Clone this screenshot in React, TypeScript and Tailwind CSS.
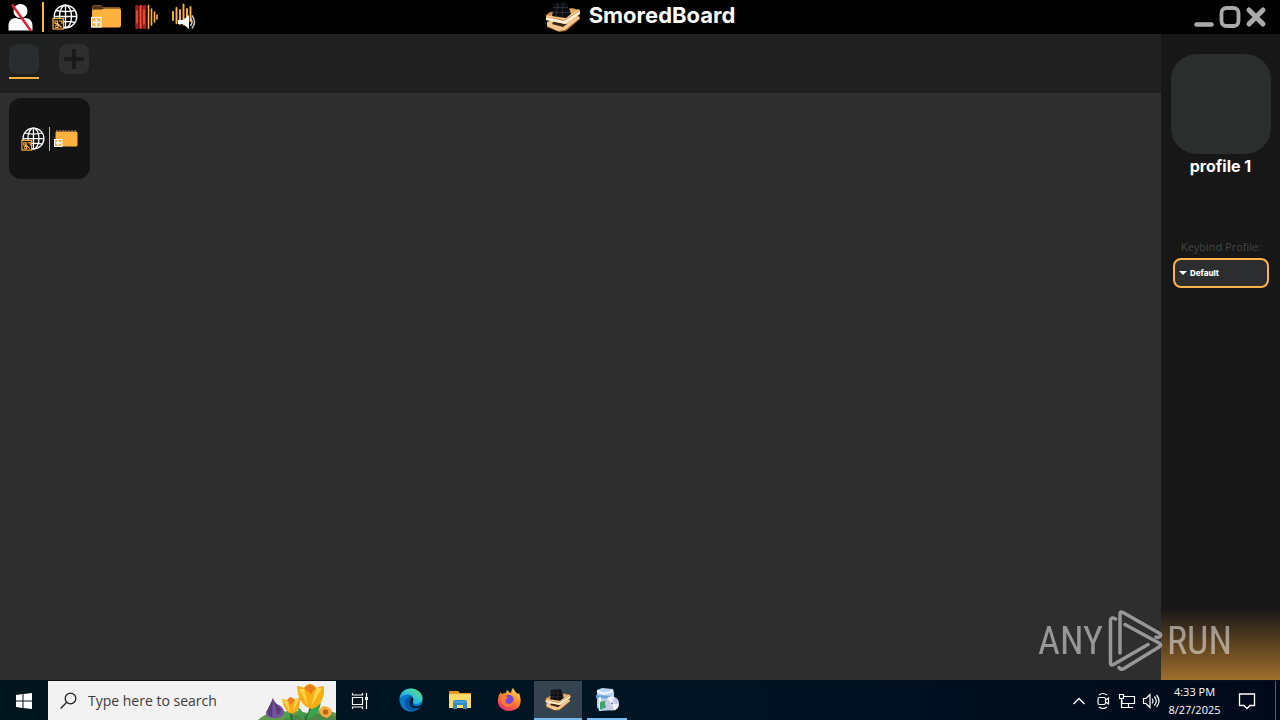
import React from "react";

type IconProps = { className?: string };

function MutedUserIcon({ className }: IconProps) {
  return (
    <svg viewBox="0 0 25 30" className={className} aria-hidden="true">
      <circle cx="12.5" cy="9" r="7" fill="#fff" />
      <path d="M0.5 28.5v-5c0-4.5 3-7.500 7.500-7.500 2.500 1.500 6.500 1.500 9 0 4.500 0 7.500 3 7.500 7.500v5z" fill="#fff" />
      <path d="M4 2.500 23 29" stroke="#e01f35" strokeWidth="2.400" />
    </svg>
  );
}

function GlobeIcon({ className }: IconProps) {
  return (
    <svg viewBox="0 0 26 26" className={className} fill="none" aria-hidden="true">
      <g stroke="#fff" strokeWidth="1.400">
        <circle cx="13.500" cy="12.500" r="11.300" />
        <ellipse cx="13.500" cy="12.500" rx="6" ry="11.300" />
        <path d="M2 12.500h23M4 6.500c5 1.500 14 1.500 19 0M4 18.500c5-1.500 14-1.500 19 0M13.500 1v23" />
      </g>
      <rect x="1" y="14.500" width="10.500" height="10.500" fill="#17120a" stroke="#ffb347" strokeWidth="1.200" />
      <path d="M3 17h2.500v2.500H3zM7 17h3v3M3 22l3-2 3.500 3.500M6 20v3.500H3" stroke="#ffb347" strokeWidth="1.200" />
    </svg>
  );
}

function FolderIcon({ className }: IconProps) {
  return (
    <svg viewBox="0 0 30 24" className={className} aria-hidden="true">
      <path d="M1.500 21V2q0-1.500 1.500-1.500h7l1.500 2H28q1.500 0 1.500 2V8h-28z" fill="#4b321a" stroke="#ad7431" strokeWidth=".7" />
      <path d="M1 6q0-1.500 2-1.500h8l2-1h14.500Q30 3.500 30 6v14q0 2.500-2.500 2.500H3Q1 22.500 1 20z" fill="#ffb140" />
      <rect x=".5" y="12.500" width="9.500" height="9.500" fill="#ffb140" stroke="#fff" strokeWidth="1.200" />
      <path d="M5.300 14v7M2 17.300h6.500" stroke="#fff" strokeWidth="1.800" />
    </svg>
  );
}

function SmallFolderIcon({ className }: IconProps) {
  return (
    <svg viewBox="0 0 24 18" className={className} aria-hidden="true">
      <path d="M2 1.500h20q1.500 0 1.500 1.500v12q0 1.500-1.500 1.500H3q-1.500 0-1.500-1.500V3z" fill="#ffb140" />
      <path d="M2 1h20" stroke="#9d704d" strokeWidth="1.500" strokeDasharray="2 1" />
      <rect x=".5" y="9.500" width="7.500" height="7" fill="#ffb140" stroke="#fff" />
      <path d="M4.300 10.500v5M2 13h5" stroke="#fff" strokeWidth="1.500" />
    </svg>
  );
}

function RecordWaveIcon({ className }: IconProps) {
  return (
    <svg viewBox="0 0 24 26" className={className} fill="none" strokeLinecap="round" aria-hidden="true">
      <path d="M3 2.500v21M7 2.500v21M10.500 2.500v21" stroke="#a31c20" strokeWidth="3.500" />
      <path d="M3 7v12M6.500 2v22M10 6v14" stroke="#ee5a35" strokeWidth="1.500" />
      <path d="M14.500 1.500v23M17.500 5v16M20.500 8v10M23 11v4" stroke="#ffb140" strokeWidth="1.600" />
    </svg>
  );
}

function SpeakerWaveIcon({ className }: IconProps) {
  return (
    <svg viewBox="0 0 26 28" className={className} fill="none" aria-hidden="true">
      <path d="M2 9v8M5.500 5v15M9 7v14M12.500 1.500v20M16 6v13M19.500 4v14" stroke="#ffb140" strokeWidth="1.900" strokeLinecap="round" />
      <path d="M7 17h5l6-5v14l-6-5H7z" fill="#fff" />
      <path d="M19.500 15q3 4 0 8M21 12.500q5 6.500 0 13" stroke="#c8c8c8" strokeWidth="1.500" />
    </svg>
  );
}

function SmoreIcon({ className }: IconProps) {
  return (
    <svg viewBox="0 0 36 32" className={className} aria-hidden="true">
      <path d="m2 21 18 4 14-11 1 4-14 12-7 1-12-5z" fill="#a9672f" />
      <path d="m2 21 5-2 13 3 11-8 4 3-15 12-7 1-11-5z" fill="#f3c78f" />
      <path d="m7 23 11 3 4-3-13-3z" fill="#3b2412" />
      <path d="m1 14 4-3 22-4 8 2v4L20 23 1 19z" fill="#cb8541" />
      <path d="m1 16 18 4 16-10v3L20 23 1 19z" fill="#fff0d6" />
      <path d="m2 15 17 3L34 9" fill="none" stroke="#ffce8e" strokeWidth="1.500" />
      <path d="m4 14 15 3 13-8-6-1z" fill="#e5ab68" />
      <path d="m8 2 14-1 4 12-5 4-14-2 1-4z" fill="#0b0d11" />
      <path d="m13 2-2 13M18 1.500 17 16M8 6.500h15M7 11.500h18" stroke="#3b3e43" strokeWidth=".7" />
    </svg>
  );
}

function TulipsIcon({ className }: IconProps) {
  return (
    <svg viewBox="0 0 78 38" className={className} aria-hidden="true">
      <path d="M0 38q9-9 22-7 13-5 27 0 14-6 29 0v7z" fill="#62994e" />
      <path d="M25 38q12-10 53-4v4z" fill="#4e8748" />
      <path d="M33 27q0 7 1 11M53 22q0 8-6 16" fill="none" stroke="#277237" strokeWidth="2.500" />
      <path d="M46 37q-1-9-6-12 0 10 6 12zM49 37q2-13 14-16-2 13-14 16zM33 38q-5-8-7-9 0 8 7 9z" fill="#37a34c" />
      <path d="M15 16q2 6 6 7 5 3 5 7 0 6-9 6-10 0-9-6 4-6 7-14z" fill="#75549d" />
      <path d="m15 16-1 19q-6-2-4-8zM16 19l3 14q6-3 3-7z" fill="#51346e" opacity=".75" />
      <path d="m24 17 5 1 3-3 4 2 6-1q1 13-8 16-8-2-10-15z" fill="#f8ab16" />
      <path d="m25 18 7 13-2-12zm16-1-6 13 2-13z" fill="#ffd44c" />
      <path d="m29 18 4-3 4 3-4 5z" fill="#e8801d" />
      <path d="M39 4q4 0 7 2 2-4 6-4t6 4q4-2 8-2 1 19-12 23Q40 24 39 4z" fill="#f9ad13" />
      <path d="m41 7 9 17-4-17zm23-1L53 25l5-19z" fill="#ffd548" />
      <path d="m46 6 6-4 6 4-5 6z" fill="#e77f1b" />
      <path d="m66 24 4 1 4 3-1 5-4 3-5-2-3-4 2-5z" fill="#ffad38" />
      <circle cx="67.500" cy="30" r="2.800" fill="#b86925" />
    </svg>
  );
}

function EdgeIcon({ className }: IconProps) {
  return (
    <svg viewBox="0 0 24 24" className={className} aria-hidden="true">
      <defs>
        <linearGradient id="edge-top" x1="0" y1="1" x2="1" y2="0">
          <stop stopColor="#087edb" />
          <stop offset=".5" stopColor="#2ec1dc" />
          <stop offset="1" stopColor="#74e454" />
        </linearGradient>
      </defs>
      <circle cx="12" cy="12" r="11.500" fill="#0878c9" />
      <path d="M.5 11C1 4 6 .5 12 .5S23.500 5 23.500 10c0 4-3 6-7 6-3 0-3.500-2-2-4 0-7-10-7-14-1z" fill="url(#edge-top)" />
      <path d="M8 10c-6 5 0 15 9 12 3-1 5-3 6-6-5 4-12 2-12-3 0-2 1-3 2-4-1-1-3-1-5 1z" fill="#0756a5" />
      <path d="M11 13c0 5 6 7 11 4q1-1 1 0c-2 5-15 4-12-4z" fill="#001a28" />
      <path d="M11 13q0-3 2-4 2 1 1 4-1 2 1 4-4-1-4-4z" fill="#001a28" />
    </svg>
  );
}

function ExplorerIcon({ className }: IconProps) {
  return (
    <svg viewBox="0 0 22 20" className={className} aria-hidden="true">
      <path d="M0 2q0-1 1-1h8l2 2h10q1 0 1 1v14H0z" fill="#e49a25" />
      <path d="M0 4h22v14H0z" fill="#ffd968" />
      <path d="M4 19v-7q0-2 2-2h10q2 0 2 2v7h-4v-4H8v4z" fill="#328cca" />
      <path d="M5 12h12" stroke="#55b3e8" />
    </svg>
  );
}

function FirefoxIcon({ className }: IconProps) {
  return (
    <svg viewBox="0 0 24 24" className={className} aria-hidden="true">
      <defs>
        <linearGradient id="fox-flame" x1=".8" y1="0" x2=".25" y2="1">
          <stop stopColor="#ffe34f" />
          <stop offset=".5" stopColor="#ff7c2c" />
          <stop offset="1" stopColor="#e72d75" />
        </linearGradient>
      </defs>
      <path d="M4 4q0 2 1 2 2-1 4-1l1-3q2 2 4 3 0-3 2-5 2 4 5 6l1-1c5 13-2 18-10 18C4 23 0 17 1 11q0-4 3-7z" fill="url(#fox-flame)" />
      <circle cx="12" cy="12.500" r="5" fill="#804ad8" />
      <path d="M4 9q4-3 7 0l-2 2q-1 5 4 4l4-3q0 7-7 7-6-2-6-10z" fill="#ff7c2e" />
      <path d="M9 8q3-3 7 1v4q-2 4-5 3-3-1-2-4l3-2z" fill="#7746d5" />
    </svg>
  );
}

function InstallerIcon({ className }: IconProps) {
  return (
    <svg viewBox="0 0 24 24" className={className} aria-hidden="true">
      <path d="m2 2 5-2 11 1 1 4v17l-14 1-3-4z" fill="#b9d4ef" />
      <path d="m1 7 17 1v3L1 10z" fill="#62a2da" />
      <path d="m2 3 7 3 9-3M5 9v14" fill="none" stroke="#edf8ff" strokeWidth="2" />
      <path d="m5 14 7-2v7l-7 3z" fill="#3ea46a" />
      <circle cx="17" cy="15.500" r="7" fill="#c9c9ec" />
      <path d="m17 15.500-5-5q3-3 7-2zM17 15.500l7 1q-1 5-5 6z" fill="#f3f3ff" />
      <circle cx="17" cy="15.500" r="1.700" fill="#747fad" stroke="#fff" />
    </svg>
  );
}

function PlayMark({ className }: IconProps) {
  return (
    <svg viewBox="0 0 56 62" className={className} fill="none" stroke="currentColor" strokeWidth="3.500" strokeLinecap="round" strokeLinejoin="round" aria-hidden="true">
      <path d="M8.500 9Q3.500 6 3.500 11v42q0 3 3 1.500L41 34.500M13 43V4q0-3 3-1.500l36 20.500q3 2 .500 4-2 1-3.500 0M18 14.500l34 18.500q3 2 0 4L17 58.500q-3 2-5-1" />
    </svg>
  );
}

const toolButtons = [
  { label: "Mute microphone", Icon: MutedUserIcon, size: "h-[30px] w-[25px]" },
  { label: "Add web sound", Icon: GlobeIcon, size: "h-[26px] w-[26px]" },
  { label: "Add folder", Icon: FolderIcon, size: "h-6 w-[30px]" },
  { label: "Record sound", Icon: RecordWaveIcon, size: "h-[26px] w-6" },
  { label: "Playback", Icon: SpeakerWaveIcon, size: "h-7 w-[26px]" },
];

function TitleBar() {
  const [user, ...rest] = toolButtons;
  return (
    <header className="grid h-[34px] shrink-0 grid-cols-[1fr_auto_1fr] items-center bg-black">
      <div className="flex items-center pl-2">
        <button aria-label={user.label}><user.Icon className={user.size} /></button>
        <div className="ml-[9px] h-[30px] w-0.5 bg-[#ffb140]" />
        <div className="ml-2 flex items-center gap-[13px]">
          {rest.map(({ label, Icon, size }) => (
            <button key={label} aria-label={label}><Icon className={size} /></button>
          ))}
        </div>
      </div>
      <div className="flex items-center gap-2">
        <SmoreIcon className="h-8 w-9" />
        <h1 className="pb-1 text-[22px] leading-6 font-bold text-white">SmoredBoard</h1>
      </div>
      <div className="flex items-center justify-end gap-1 pr-[13px] text-[#aaa]">
        <button aria-label="Minimize">
          <svg viewBox="0 0 22 22" className="size-[22px]"><path d="M3.500 18.500h15" stroke="currentColor" strokeWidth="4.500" strokeLinecap="round" /></svg>
        </button>
        <button aria-label="Maximize">
          <svg viewBox="0 0 22 22" className="size-[22px]"><rect x="2.500" y="2" width="17" height="18" rx="5" fill="none" stroke="currentColor" strokeWidth="3.800" /></svg>
        </button>
        <button aria-label="Close">
          <svg viewBox="0 0 22 22" className="size-[22px]"><path d="m4 4 14 14M18 4 4 18" stroke="currentColor" strokeWidth="5" strokeLinecap="round" /></svg>
        </button>
      </div>
    </header>
  );
}

function Workspace() {
  return (
    <main className="flex min-w-0 flex-1 flex-col bg-[#2e2e2e]">
      <nav aria-label="Boards" className="flex h-[59px] items-start gap-5 bg-[#202020] px-[9px] pt-[10px]">
        <button aria-label="Board 1" aria-current="page" className="h-[35px] border-b-2 border-[#ffb140]">
          <span className="mb-[3px] block size-[30px] rounded-lg bg-[#292d2d]" />
        </button>
        <button aria-label="Add board" className="flex size-[30px] items-center justify-center rounded-lg bg-[#2e2e2e]">
          <svg viewBox="0 0 20 20" className="size-5"><path d="M10 0v20M0 10h20" stroke="#1a1a1a" strokeWidth="4" /></svg>
        </button>
      </nav>
      <section aria-label="Sounds" className="flex px-[9px] py-[5px]">
        <div className="flex size-[81px] items-center justify-center gap-1 rounded-xl bg-[#141414]">
          <button aria-label="Add from web"><GlobeIcon className="size-6" /></button>
          <div className="h-6 w-px bg-[#ffb140]" />
          <button aria-label="Add from folder"><SmallFolderIcon className="h-[18px] w-6" /></button>
        </div>
      </section>
    </main>
  );
}

function ProfilePanel() {
  return (
    <aside className="flex w-[119px] shrink-0 flex-col bg-[#171717]">
      <div className="flex flex-col items-center pt-5">
        <div className="size-[100px] rounded-[26px] bg-[#2b2e2d]" />
        <h2 className="mt-0.5 text-base leading-5 font-bold text-white">profile 1</h2>
      </div>
      <div className="mt-[63px] flex flex-col pr-[11px] pl-3">
        <label htmlFor="keybind" className="text-center font-['Open_Sans',sans-serif] text-[11px] leading-4 whitespace-nowrap text-[#454545]">Keybind Profile:</label>
        <div className="relative mt-[3px]">
          <select id="keybind" className="block h-[30px] w-full appearance-none rounded-lg border-2 border-[#ffb347] bg-[#2c2d2f] pl-[15px] text-[8px] font-extrabold text-white">
            <option>Default</option>
          </select>
          <svg viewBox="0 0 8 4" className="pointer-events-none absolute top-[13px] left-[6px] h-1 w-2"><path d="M0 0h8L4 4z" fill="#fff" /></svg>
        </div>
      </div>
      <div className="mt-auto h-[72px] bg-linear-to-b from-[#171717] via-[#5c421f] to-[#a16f2d]" />
    </aside>
  );
}

const launchers = [
  { label: "Edge", Icon: EdgeIcon, size: "size-6" },
  { label: "File Explorer", Icon: ExplorerIcon, size: "h-5 w-[22px]" },
  { label: "Firefox", Icon: FirefoxIcon, size: "size-6" },
];

function Taskbar() {
  return (
    <footer className="flex h-10 shrink-0 items-stretch border-t border-[#061019] bg-linear-to-r from-[#00151e] via-[#001524] to-[#000919] font-['Open_Sans',sans-serif] text-white">
      <button aria-label="Start" className="flex w-12 items-center justify-center">
        <svg viewBox="0 0 16 16" className="size-4" fill="#fff"><path d="m0 2 6.500-1v6.500H0zM7.500.9 16 0v7.500H7.500zM0 8.500h6.500V15L0 14zM7.500 8.500H16V16l-8.500-1z" /></svg>
      </button>
      <div className="relative flex w-72 items-center bg-[#f2f2f2]">
        <svg viewBox="0 0 18 18" className="ml-3 size-[18px]" fill="none" stroke="#222" strokeWidth="1.300"><circle cx="10.500" cy="6.500" r="5.300" /><path d="M6.700 10.300.7 16.500" /></svg>
        <input aria-label="Search" placeholder="Type here to search" className="ml-[10px] h-full w-40 bg-transparent text-sm text-[#333] outline-none placeholder:text-[#3b3b3b]" />
        <TulipsIcon className="absolute right-0 bottom-0 h-[38px] w-[78px]" />
      </div>
      <button aria-label="Task view" className="flex w-12 items-center justify-center">
        <svg viewBox="0 0 18 18" className="size-[18px]" fill="none" stroke="#fff" strokeWidth="1.200"><path d="M1.500 5.500h10v7h-10zM1.500 1v2h10V1M1.500 17v-2h10v2M15.500 1v16" /><path d="M14 5h3v3h-3z" fill="#fff" stroke="none" /></svg>
      </button>
      <div className="flex pr-px pl-0.5 pb-0.5">
        {launchers.map(({ label, Icon, size }) => (
          <button key={label} aria-label={label} className="flex w-[49px] items-center justify-center"><Icon className={size} /></button>
        ))}
      </div>
      <button aria-label="SmoredBoard" className="flex w-12 items-center justify-center border-b-2 border-[#76b9ed] bg-[#33434f]">
        <SmoreIcon className="size-[26px]" />
      </button>
      <button aria-label="Setup" className="ml-[5px] flex w-10 items-center justify-center border-b-2 border-[#76b9ed]">
        <InstallerIcon className="size-6" />
      </button>
      <div className="ml-auto flex items-center">
        <div className="flex items-center">
          <button aria-label="Show hidden icons" className="flex w-6 justify-center">
            <svg viewBox="0 0 14 14" className="size-[14px]" fill="none" stroke="#fff" strokeWidth="1.400"><path d="m1.500 10 5.500-5.500L12.500 10" /></svg>
          </button>
          <button aria-label="Meet now" className="flex w-6 justify-center">
            <svg viewBox="0 0 16 18" className="h-[18px] w-4" fill="none" stroke="#fff" strokeWidth="1.200"><rect x="3" y="5.500" width="7.500" height="7" rx="1.500" /><path d="m10.500 8 3-2v6l-3-2M4 3q4-3 8 0M4 15q4 3 8 0" /></svg>
          </button>
          <button aria-label="Network" className="flex w-6 justify-center">
            <svg viewBox="0 0 18 16" className="h-4 w-[18px]" fill="none" stroke="#fff" strokeWidth="1.200"><path d="M6 3.500h10.500v7H4V7M10.500 11v3.500M6 14.500h9M1.500 1.500h4v4h-4zM3.500 6v8.500H6" /></svg>
          </button>
          <button aria-label="Volume" className="flex w-6 justify-center">
            <svg viewBox="0 0 18 16" className="h-4 w-[18px]" fill="none" stroke="#fff" strokeWidth="1.200"><path d="M1.500 5.500H4l4-4v13l-4-4H1.500zM10 5.500q2 2.500 0 5M12.300 3.500q4 4.500 0 9M14.500 2q5 6 0 12" /></svg>
          </button>
        </div>
        <time dateTime="2025-08-27T16:33" className="ml-[5px] flex w-[53px] flex-col items-center text-[11px] leading-[18px] whitespace-nowrap">
          <span>4:33 PM</span><span>8/27/2025</span>
        </time>
        <button aria-label="Notifications" className="mr-[19px] ml-[17px]">
          <svg viewBox="0 0 18 18" className="size-[18px]" fill="none" stroke="#fff" strokeWidth="1.300"><path d="M1.500 2h15v11.500H12l-3 3-3-3H1.500z" /></svg>
        </button>
        <div className="mr-1 h-10 w-px bg-[#50606b]" />
      </div>
    </footer>
  );
}

export default function App() {
  return (
    <div className="flex min-h-screen flex-col bg-[#2e2e2e] font-[Inter,sans-serif]">
      <TitleBar />
      <div className="flex flex-1"><Workspace /><ProfilePanel /></div>
      <Taskbar />
      <div className="pointer-events-none fixed right-12 bottom-12 flex items-center gap-1 font-['Roboto_Condensed','Liberation_Sans_Narrow','Liberation_Sans',sans-serif] text-[38px] leading-[62px] font-normal text-white/50">
        <span>ANY</span><PlayMark className="h-[62px] w-14" /><span>RUN</span>
      </div>
    </div>
  );
}
